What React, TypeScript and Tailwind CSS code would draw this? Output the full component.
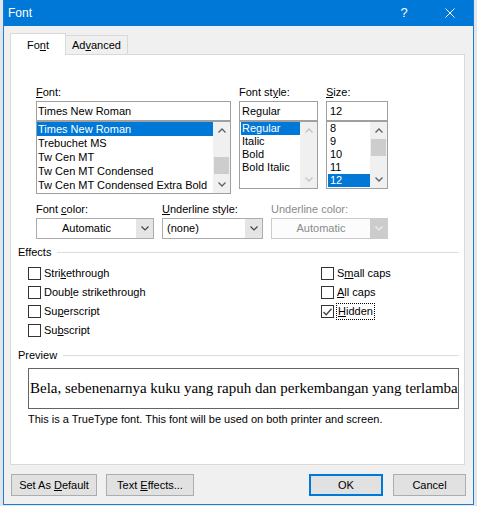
import React from "react";

function Chev({ dir, color }: { dir: "up" | "down"; color: string }) {
  return (
    <svg width="8" height="5" viewBox="0 0 8 5" className="block">
      <polyline
        points={dir === "up" ? "0.5,4.5 4,1 7.5,4.5" : "0.5,0.5 4,4 7.5,0.5"}
        fill="none"
        stroke={color}
        strokeWidth="1.3"
      />
    </svg>
  );
}

function ScrollBar({ thumbCls, disabled }: { thumbCls?: string; disabled?: boolean }) {
  const c = disabled ? "#c4c4c4" : "#606060";
  return (
    <div className="w-[17px] h-full bg-[#f0f0f0] flex flex-col">
      <div className="h-[17px] flex items-center justify-center">
        <Chev dir="up" color={c} />
      </div>
      <div className="flex-1">{thumbCls && <div className={"mx-px bg-[#cdcdcd] " + thumbCls} />}</div>
      <div className="h-[17px] flex items-center justify-center">
        <Chev dir="down" color={c} />
      </div>
    </div>
  );
}

function Row({ children, sel, cls }: { children: React.ReactNode; sel?: boolean; cls: string }) {
  return (
    <div className={cls + (sel ? " bg-[#0078d7] text-white" : "")}>{children}</div>
  );
}

function SelectBox({ children, center, disabled, w }: { children: React.ReactNode; center?: boolean; disabled?: boolean; w: string }) {
  return (
    <div className={w + " h-[21px] border flex " + (disabled ? "border-[#cccccc] bg-[#fcfcfc] text-[#8a8a8a]" : "border-[#acacac] bg-white")}>
      <div className={"flex-1 flex items-center " + (center ? "justify-center" : "pl-[4px]")}>{children}</div>
      <div className={"w-[17px] flex items-center justify-center " + (disabled ? "bg-[#cccccc]" : "bg-[#e5e5e5]")}>
        <svg width="8" height="5" viewBox="0 0 8 5" className="block">
          <polyline points="0.5,0.5 4,4 7.5,0.5" fill="none" stroke={disabled ? "#f0f0f0" : "#404040"} strokeWidth="1.1" />
        </svg>
      </div>
    </div>
  );
}

function Check({ children, checked, focus }: { children: React.ReactNode; checked?: boolean; focus?: boolean }) {
  return (
    <div className="h-[19px] flex items-center">
      <div className="w-[13px] h-[13px] border border-[#333333] bg-white flex items-center justify-center">
        {checked && (
          <svg width="9" height="8" viewBox="0 0 9 8" className="block">
            <polyline points="0.5,4 3.2,6.7 8.5,0.8" fill="none" stroke="#444444" strokeWidth="1.3" />
          </svg>
        )}
      </div>
      {focus ? (
        <span className="ml-[2px] h-[17px] leading-[15px] border border-dotted border-black px-px">{children}</span>
      ) : (
        <span className="ml-[3px]">{children}</span>
      )}
    </div>
  );
}

export default function App() {
  return (
    <div className="w-[477px] h-[506px] flex bg-[#e4e6ea] overflow-hidden font-['Liberation_Sans',Arial,sans-serif] text-[11px] text-black">
      <div className="w-[3px] h-full bg-[#e2e5ea]" />
      <div className="w-[471px] h-[505px] flex flex-col border-x border-b border-[#1a7fd4] bg-[#f0f0f0]">
        {/* Title bar */}
        <div className="h-[26px] bg-[#0078d7] flex items-center text-white shrink-0">
          <span className="pl-[4px] text-[12px] flex-1">Font</span>
          <div className="w-[46px] h-full flex items-center justify-center text-[13px]">?</div>
          <div className="w-[46px] h-full flex items-center justify-center">
            <svg width="10" height="10" viewBox="0 0 10 10" className="block">
              <path d="M0.5 0.5 L9.5 9.5 M9.5 0.5 L0.5 9.5" stroke="white" strokeWidth="1" />
            </svg>
          </div>
        </div>

        {/* Body */}
        <div className="flex-1 pl-[6px] pr-[7px] pt-[7px] flex flex-col">
          {/* Tabs */}
          <div className="flex items-end h-[22px] -mb-px relative z-10">
            <div className="w-[56px] h-[22px] bg-white border border-b-0 border-[#d9d9d9] flex items-center justify-center pt-px">
              <span>
                Fo<u>n</u>t
              </span>
            </div>
            <div className="w-[62px] h-[19px] mb-px bg-[#f0f0f0] border border-l-0 border-b-0 border-[#d9d9d9] flex items-center justify-center pt-px">
              <span>
                Ad<u>v</u>anced
              </span>
            </div>
          </div>

          {/* Panel */}
          <div className="w-[455px] h-[411px] bg-white border border-[#d9d9d9] pt-[30px] shrink-0">
            {/* Top lists */}
            <div className="flex items-start gap-[8px] pl-[25px]">
              <div className="w-[195px]">
                <div className="h-[16px] leading-[14px]">
                  <u>F</u>ont:
                </div>
                <div className="h-[20px] border border-[#a0a0a0] pl-[1px] leading-[18px]">Times New Roman</div>
                <div className="h-[73px] border border-[#a0a0a0] flex">
                  <div className="flex-1">
                    <Row sel cls="h-[14px] leading-[14px] pl-[1px]">Times New Roman</Row>
                    <Row cls="h-[14px] leading-[14px] pl-[1px]">Trebuchet MS</Row>
                    <Row cls="h-[14px] leading-[14px] pl-[1px]">Tw Cen MT</Row>
                    <Row cls="h-[14px] leading-[14px] pl-[1px]">Tw Cen MT Condensed</Row>
                    <Row cls="h-[14px] leading-[14px] pl-[1px]">Tw Cen MT Condensed Extra Bold</Row>
                  </div>
                  <ScrollBar thumbCls="mt-[18px] h-[17px]" />
                </div>
              </div>

              <div className="w-[79px]">
                <div className="h-[16px] leading-[14px]">
                  Font st<u>y</u>le:
                </div>
                <div className="h-[20px] border border-[#a0a0a0] pl-[2px] leading-[18px]">Regular</div>
                <div className="h-[68px] border border-[#a0a0a0] flex">
                  <div className="flex-1 pl-px">
                    <Row sel cls="h-[13px] leading-[13px] pl-[1px]">Regular</Row>
                    <Row cls="h-[13px] leading-[13px] pl-[1px]">Italic</Row>
                    <Row cls="h-[13px] leading-[13px] pl-[1px]">Bold</Row>
                    <Row cls="h-[13px] leading-[13px] pl-[1px]">Bold Italic</Row>
                  </div>
                  <ScrollBar disabled />
                </div>
              </div>

              <div className="w-[62px]">
                <div className="h-[16px] leading-[14px]">
                  <u>S</u>ize:
                </div>
                <div className="h-[20px] border border-[#a0a0a0] pl-[3px] leading-[18px]">12</div>
                <div className="h-[68px] border border-[#a0a0a0] flex">
                  <div className="flex-1 pl-px">
                    <Row cls="h-[13px] leading-[13px] pl-[2px]">8</Row>
                    <Row cls="h-[13px] leading-[13px] pl-[2px]">9</Row>
                    <Row cls="h-[13px] leading-[13px] pl-[2px]">10</Row>
                    <Row cls="h-[13px] leading-[13px] pl-[2px]">11</Row>
                    <Row sel cls="h-[13px] leading-[13px] pl-[2px]">12</Row>
                  </div>
                  <ScrollBar thumbCls="mt-0 h-[17px]" />
                </div>
              </div>
            </div>

            {/* Color row */}
            <div className="mt-[7px] pl-[25px] flex gap-[8px]">
              <div>
                <div className="h-[17px] leading-[16px]">
                  Font <u>c</u>olor:
                </div>
                <SelectBox w="w-[118px]" center>
                  Automatic
                </SelectBox>
              </div>
              <div>
                <div className="h-[17px] leading-[16px]">
                  <u>U</u>nderline style:
                </div>
                <SelectBox w="w-[101px]">(none)</SelectBox>
              </div>
              <div>
                <div className="h-[17px] leading-[16px] text-[#8a8a8a]">Underline color:</div>
                <SelectBox w="w-[117px]" center disabled>
                  Automatic
                </SelectBox>
              </div>
            </div>

            {/* Effects */}
            <div className="mt-[5px] pl-[7px] pr-[5px] h-[16px] flex items-center">
              <span>Effects</span>
              <div className="flex-1 h-px bg-[#dcdcdc] ml-[6px]" />
            </div>
            <div className="mt-[4px] pl-[17px] flex">
              <div className="w-[293px]">
                <Check>
                  Stri<u>k</u>ethrough
                </Check>
                <Check>
                  Doub<u>l</u>e strikethrough
                </Check>
                <Check>
                  Su<u>p</u>erscript
                </Check>
                <Check>
                  Su<u>b</u>script
                </Check>
              </div>
              <div>
                <Check>
                  S<u>m</u>all caps
                </Check>
                <Check>
                  <u>A</u>ll caps
                </Check>
                <Check checked focus>
                  <u>H</u>idden
                </Check>
              </div>
            </div>

            {/* Preview */}
            <div className="mt-[7px] pl-[7px] pr-[5px] h-[16px] flex items-center">
              <span>Preview</span>
              <div className="flex-1 h-px bg-[#dcdcdc] ml-[6px]" />
            </div>
            <div className="mt-[5px] ml-[17px] w-[431px] h-[41px] border border-[#646464] flex items-center pl-px overflow-hidden whitespace-nowrap font-['Liberation_Serif','Times_New_Roman',serif] text-[15px]">
              Bela, sebenenarnya kuku yang rapuh dan perkembangan yang terlamba
            </div>
            <div className="mt-[2px] pl-[17px] h-[16px] leading-[16px]">
              This is a TrueType font. This font will be used on both printer and screen.
            </div>
          </div>

          {/* Buttons */}
          <div className="mt-[9px] flex h-[22px]">
            <div className="ml-px w-[86px] h-[22px] bg-[#e1e1e1] border border-[#adadad] flex items-center justify-center">
              <span>
                Set As <u>D</u>efault
              </span>
            </div>
            <div className="ml-[9px] w-[88px] h-[22px] bg-[#e1e1e1] border border-[#adadad] flex items-center justify-center">
              <span>
                Text <u>E</u>ffects...
              </span>
            </div>
            <div className="ml-auto w-[74px] h-[22px] bg-[#e1e1e1] border-2 border-[#0078d7] flex items-center justify-center">
              OK
            </div>
            <div className="ml-[10px] w-[73px] h-[22px] bg-[#e1e1e1] border border-[#adadad] flex items-center justify-center">
              Cancel
            </div>
          </div>
        </div>
      </div>
      <div className="w-[3px] h-full bg-[#e2e5ea]" />
    </div>
  );
}
